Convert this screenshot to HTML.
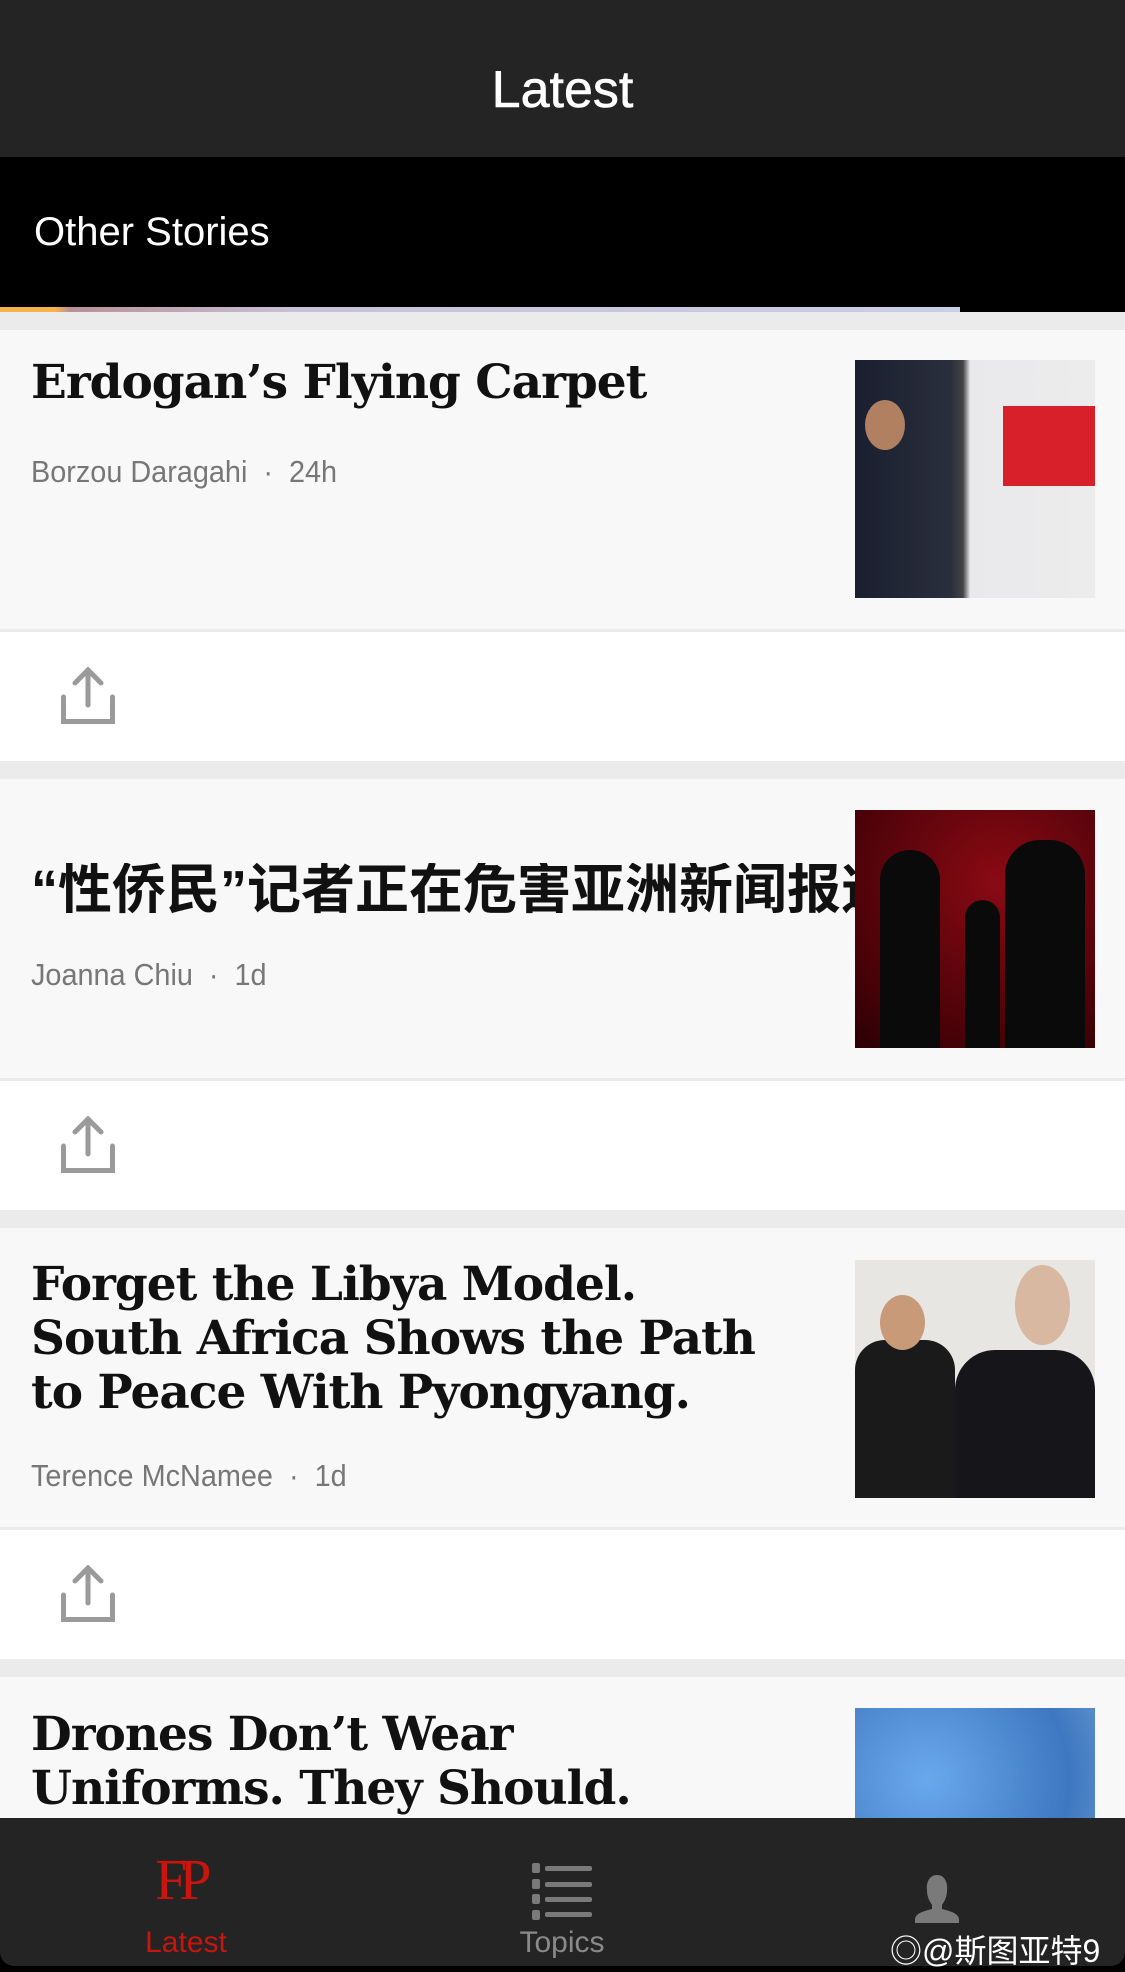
<!DOCTYPE html>
<html><head><meta charset="utf-8"><style>
*{margin:0;padding:0;box-sizing:border-box}
body{width:1125px;height:1971px;overflow:hidden;background:#000;font-family:"Liberation Sans",sans-serif;position:relative}
.hdr{position:absolute;left:0;top:0;width:1125px;height:157px;background:#242424;color:#fff;font-size:52px;text-align:center;line-height:180px;-webkit-text-stroke:0.6px #fff}
.os{position:absolute;left:0;top:157px;width:1125px;height:150px;background:#000;color:#fff;font-size:40px;padding-left:34px;line-height:150px}
.strip{position:absolute;left:0;top:307px;width:960px;height:5px;background:linear-gradient(90deg,#f4b34a 0,#f4b34a 55px,#b89098 70px,#c9c2d8 300px,#c9cde6 960px)}
.feed{position:absolute;left:0;top:312px;width:1125px;height:1506px;background:#ebebeb;overflow:hidden}
.card{position:absolute;left:0;width:1125px;height:299px;background:#f8f8f8}
.share{position:absolute;left:0;width:1125px;height:129px;background:#fff}
.t{position:absolute;left:31px;font-family:"DejaVu Serif","Liberation Serif",serif;font-weight:bold;font-size:47px;color:#111;line-height:54px;letter-spacing:-1px}
.cn{font-family:"Liberation Sans","Noto Sans CJK SC",sans-serif;font-size:54px;white-space:nowrap;width:824px;overflow:hidden;letter-spacing:0}
.by{position:absolute;left:31px;font-size:31px;color:#777;transform:scaleX(0.93);transform-origin:left}
.img{position:absolute;left:855px;width:240px;height:238px}
.tab{position:absolute;left:0;top:1818px;width:1125px;height:148px;background:#242424;border-radius:0 0 14px 14px}
.lbl{position:absolute;top:1926px;font-size:30px;text-align:center;width:200px}
</style></head><body>
<div class="hdr">Latest</div>
<div class="os">Other Stories</div>
<div class="strip"></div>
<div class="feed">
  <div class="card" style="top:18px">
    <div class="t" style="top:26px">Erdogan’s Flying Carpet</div>
    <div class="by" style="top:124px">Borzou Daragahi &nbsp;·&nbsp; 24h</div>
    <div class="img" style="top:30px;background:linear-gradient(90deg,#1a1f30 0,#2a2f3c 40%,#444 45%,#e9e9ec 48%,#ececec 100%)">
      <div style="position:absolute;left:148px;top:46px;width:92px;height:80px;background:#d8202a"></div>
      <div style="position:absolute;left:10px;top:40px;width:40px;height:50px;border-radius:50%;background:#b08060"></div>
    </div>
  </div>
  <div class="share" style="top:320px"><svg style="position:absolute;left:61px;top:35px" width="54" height="57" viewBox="0 0 54 57"><g fill="none" stroke="#9a9a9a" stroke-width="5" stroke-linecap="round"><path d="M27 3V38M14 16L27 3L40 16"/><path d="M2.5 30V54.5H51.5V30"/></g></svg></div>
  <div class="card" style="top:467px">
    <div class="t cn" style="top:84px">“性侨民”记者正在危害亚洲新闻报道</div>
    <div class="by" style="top:178px">Joanna Chiu &nbsp;·&nbsp; 1d</div>
    <div class="img" style="top:31px;background:radial-gradient(circle at 60% 30%,#8a0a14,#4a0208 70%,#2a0004)">
      <div style="position:absolute;left:25px;top:40px;width:60px;height:198px;background:#0a0a0a;border-radius:30px 30px 0 0"></div>
      <div style="position:absolute;left:150px;top:30px;width:80px;height:208px;background:#0a0a0a;border-radius:35px 35px 0 0"></div>
      <div style="position:absolute;left:110px;top:90px;width:35px;height:148px;background:#0a0a0a;border-radius:18px 18px 0 0"></div>
    </div>
  </div>
  <div class="share" style="top:769px"><svg style="position:absolute;left:61px;top:35px" width="54" height="57" viewBox="0 0 54 57"><g fill="none" stroke="#9a9a9a" stroke-width="5" stroke-linecap="round"><path d="M27 3V38M14 16L27 3L40 16"/><path d="M2.5 30V54.5H51.5V30"/></g></svg></div>
  <div class="card" style="top:916px">
    <div class="t" style="top:30px">Forget the Libya Model.<br>South Africa Shows the Path<br>to Peace With Pyongyang.</div>
    <div class="by" style="top:230px">Terence McNamee &nbsp;·&nbsp; 1d</div>
    <div class="img" style="top:32px;background:#e8e6e2">
      <div style="position:absolute;left:0;top:80px;width:100px;height:158px;background:#1a1a1a;border-radius:30px 30px 0 0"></div>
      <div style="position:absolute;left:25px;top:35px;width:45px;height:55px;background:#c89a78;border-radius:50%"></div>
      <div style="position:absolute;left:100px;top:90px;width:140px;height:148px;background:#15151a;border-radius:40px 40px 0 0"></div>
      <div style="position:absolute;left:160px;top:5px;width:55px;height:80px;background:#d8b8a0;border-radius:50%"></div>
    </div>
  </div>
  <div class="share" style="top:1218px"><svg style="position:absolute;left:61px;top:35px" width="54" height="57" viewBox="0 0 54 57"><g fill="none" stroke="#9a9a9a" stroke-width="5" stroke-linecap="round"><path d="M27 3V38M14 16L27 3L40 16"/><path d="M2.5 30V54.5H51.5V30"/></g></svg></div>
  <div class="card" style="top:1365px">
    <div class="t" style="top:31px">Drones Don’t Wear<br>Uniforms. They Should.</div>
    <div class="img" style="top:31px;background:radial-gradient(ellipse at 30% 30%,#6aa8ec,#3e78c0 60%,#7aa8d8)"></div>
  </div>
</div>
<div class="tab">
  <div style="position:absolute;left:155px;top:32px;font-family:'Liberation Serif',serif;font-size:58px;color:#c8150d;letter-spacing:-8px;line-height:60px">FP</div>
  <svg style="position:absolute;left:532px;top:45px" width="60" height="60" viewBox="0 0 60 60"><g fill="#7a7a7a"><rect x="0" y="0" width="8" height="10" rx="2"/><rect x="0" y="16" width="8" height="10" rx="2"/><rect x="0" y="31" width="8" height="10" rx="2"/><rect x="0" y="47" width="8" height="10" rx="2"/><rect x="13" y="3" width="47" height="5" rx="2"/><rect x="13" y="19" width="47" height="5" rx="2"/><rect x="13" y="34" width="47" height="5" rx="2"/><rect x="13" y="49" width="47" height="5" rx="2"/></g></svg>
  <svg style="position:absolute;left:912px;top:57px" width="50" height="50" viewBox="0 0 50 50"><path fill="#7a7a7a" d="M25 0C17 0 14 8 15 16C15 22 18 27 20 30L20 34C12 36 4 38 3 44L3 48L47 48L47 44C46 38 38 36 30 34L30 30C32 27 35 22 35 16C36 8 33 0 25 0Z"/></svg>
</div>
<div class="lbl" style="left:86px;color:#c8150d">Latest</div>
<div class="lbl" style="left:462px;color:#8a8a8a">Topics</div>
<div class="lbl" style="left:890px;width:230px;color:#fff;text-align:left;font-family:'Liberation Sans','Noto Sans CJK SC',sans-serif;font-size:32px">◎@斯图亚特9</div>
</body></html>
